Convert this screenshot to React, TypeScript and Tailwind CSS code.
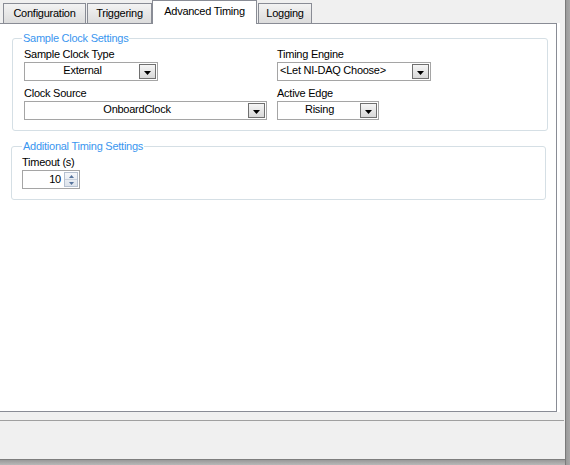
import React from 'react';

type ComboProps = {
  value: string;
  width: string;
  left?: boolean;
};

function DropButton() {
  return (
    <div className="flex h-full w-[17px] justify-center border border-[#707070] bg-linear-to-b from-[#f6f6f6] to-[#d8d8d8] pt-[6px]">
      <svg width="7" height="4" viewBox="0 0 7 4">
        <polygon points="0,0 7,0 3.5,4" fill="#000" />
      </svg>
    </div>
  );
}

function Combo({ value, width, left }: ComboProps) {
  return (
    <div className={`mt-px flex h-[19px] border border-[#a5a5a5] bg-white p-px ${width}`}>
      <div className={`flex-1 leading-[13px] ${left ? 'pl-px text-left' : 'text-center'}`}>{value}</div>
      <DropButton />
    </div>
  );
}

function Field({ label, children }: { label: string; children: React.ReactNode }) {
  return (
    <div className="flex flex-col">
      <div className="leading-[13px]">{label}</div>
      {children}
    </div>
  );
}

function Spin() {
  return (
    <div className="flex w-[14px] flex-col border border-[#b6c1d0] bg-linear-to-b from-[#f5f7fa] to-[#dde3eb]">
      <div className="flex flex-1 items-center justify-center border-b border-[#c9d1dc]">
        <svg width="5" height="3" viewBox="0 0 5 3">
          <polygon points="2.5,0 5,3 0,3" fill="#56739c" />
        </svg>
      </div>
      <div className="flex flex-1 items-center justify-center">
        <svg width="5" height="3" viewBox="0 0 5 3">
          <polygon points="0,0 5,0 2.5,3" fill="#56739c" />
        </svg>
      </div>
    </div>
  );
}

export default function App() {
  return (
    <div className="flex h-[465px] w-[570px] bg-[#f0f0f0] font-['Liberation_Sans',Arial,sans-serif] text-[11px] tracking-[-0.25px] text-black">
      <div className="flex w-[565px] flex-col">
        {/* tab strip */}
        <div className="flex h-[23px] items-end">
          <div className="ml-[3px] h-[20px] w-[83px] border border-b-0 border-[#898c95] bg-linear-to-b from-[#f3f3f3] to-[#dcdcdc] pt-[3px] text-center leading-[13px]">
            Configuration
          </div>
          <div className="ml-px h-[20px] w-[65px] border border-b-0 border-[#898c95] bg-linear-to-b from-[#f3f3f3] to-[#dcdcdc] pt-[3px] text-center leading-[13px]">
            Triggering
          </div>
          <div className="relative z-10 -mb-px h-[24px] w-[105px] border border-b-0 border-[#898c95] bg-white pt-[4px] text-center leading-[13px]">
            Advanced Timing
          </div>
          <div className="ml-px h-[20px] w-[54px] border border-b-0 border-[#898c95] bg-linear-to-b from-[#f3f3f3] to-[#dcdcdc] pt-[3px] text-center leading-[13px]">
            Logging
          </div>
        </div>

        {/* tab page */}
        <div className="flex">
          <div className="h-[389px] w-[557px] border-t border-r border-b border-[#898c95] bg-white">
            <fieldset className="mt-[8px] ml-[12px] w-[536px] rounded-[3px] border border-[#d5dfe5]">
              <legend className="ml-[9px] px-px leading-[13px] text-[#3a96ef]">Sample Clock Settings</legend>
              <div className="grid grid-cols-[253px_1fr] gap-y-[6px] pt-[3px] pb-[10px] pl-[11px]">
                <Field label="Sample Clock Type">
                  <Combo value="External" width="w-[134px]" />
                </Field>
                <Field label="Timing Engine">
                  <Combo value="<Let NI-DAQ Choose>" width="w-[154px]" left />
                </Field>
                <Field label="Clock Source">
                  <Combo value="OnboardClock" width="w-[243px]" />
                </Field>
                <Field label="Active Edge">
                  <Combo value="Rising" width="w-[102px]" />
                </Field>
              </div>
            </fieldset>

            <fieldset className="mt-[9px] ml-[11px] w-[535px] rounded-[3px] border border-[#d5dfe5]">
              <legend className="ml-[10px] px-px leading-[13px] text-[#3a96ef]">Additional Timing Settings</legend>
              <div className="pt-[3px] pb-[10px] pl-[10px]">
                <Field label="Timeout (s)">
                  <div className="mt-px flex h-[19px] w-[58px] border border-[#a5a5a5] bg-white p-px">
                    <div className="flex-1 pr-[3px] text-right leading-[15px]">10</div>
                    <Spin />
                  </div>
                </Field>
              </div>
            </fieldset>
          </div>
          <div className="w-[3px] bg-white" />
        </div>

        {/* button area */}
        <div className="h-[8px]" />
        <div className="h-px w-[564px] bg-[#a0a0a0]" />
        <div className="flex-1" />
        <div className="h-[6px] border-t border-[#7e7e7e] bg-linear-to-b from-[#999999] to-[#b8b8b8]" />
      </div>
      <div className="w-[5px] border-l border-[#7a7a7a] bg-linear-to-r from-[#9a9a9a] to-[#a8a8a8]" />
    </div>
  );
}
